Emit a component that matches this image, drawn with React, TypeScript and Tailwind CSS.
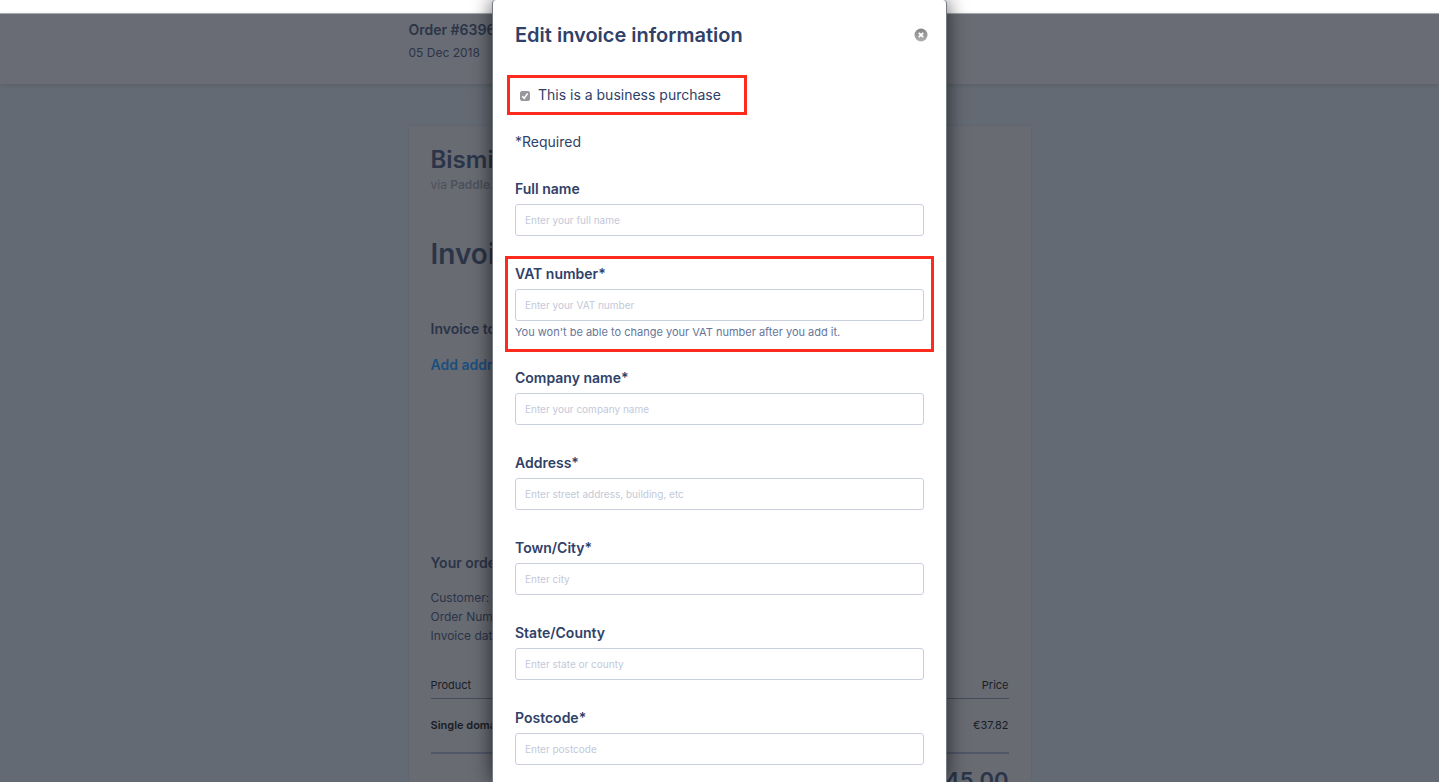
import { useState } from "react";

type FieldProps = {
  id: string;
  label: string;
  placeholder: string;
  help?: string;
  highlighted?: boolean;
};

const Field = ({ id, label, placeholder, help, highlighted }: FieldProps) => {
  return (
    <div className="relative mb-7">
      <label htmlFor={id} className="block text-sm leading-5 font-semibold text-[#2f4168]">{label}</label>
      <input
        id={id}
        type="text"
        placeholder={placeholder}
        className="mt-[5px] block h-8 w-full rounded-[3px] border border-[#c9cfdd] bg-white px-[9px] text-[10px] text-[#2f4168] placeholder:text-[#c3c9d8] outline-none"
      />
      {help && <p className="pt-1 text-[11px] leading-[15px] text-[#66769a]">{help}</p>}
      {highlighted && <div className="pointer-events-none absolute -inset-x-2.5 -top-2 -bottom-3 border-3 border-[#fb2b1d]" />}
    </div>
  );
};

const OrderPage = () => {
  return (
    <div className="grow bg-[#646a73] text-[#2b3448]">
      <header className="h-[71px] border-t border-[#a9abb0] bg-[#696c74] shadow-[0_1px_4px_rgba(0,0,0,0.12)]">
        <div className="mx-auto w-[622px] pt-1.5">
          <h2 className="text-sm leading-5 font-semibold">Order #6396</h2>
          <p className="pt-[3px] text-xs leading-5">05 Dec 2018</p>
        </div>
      </header>

      <main className="mx-auto mt-[42px] w-[622px] bg-[#686b72] px-[22px] pt-[18px] shadow-[0_0_2px_rgba(0,0,0,0.1)]">
        <h1 className="text-2xl leading-8 font-semibold">Bismillah</h1>
        <p className="pt-px text-xs leading-4 text-[#4c515c]">via <span className="font-semibold">Paddle.com</span></p>
        <h2 className="mt-[43px] text-[28px] leading-9 font-semibold">Invoice</h2>
        <h3 className="mt-[47px] text-sm leading-5 font-semibold">Invoice to</h3>
        <a href="#address" className="mt-4 block text-sm leading-5 font-semibold text-[#1b4f7d]">Add address</a>
        <h3 className="mt-[178px] text-sm leading-5 font-semibold">Your order</h3>
        <div className="mt-[15px] text-xs leading-[19px]">
          <p>Customer:</p>
          <p>Order Number:</p>
          <p>Invoice date:</p>
        </div>
        <table className="mt-[31px] w-full text-[11px] text-[#191d26]">
          <thead>
            <tr className="h-[22px] border-b border-[#444b5b]">
              <th className="pb-1 text-left font-normal">Product</th>
              <th className="pb-1 text-right font-normal">Price</th>
            </tr>
          </thead>
          <tbody>
            <tr className="h-[55px] border-b-2 border-[#505767]">
              <td className="text-left font-semibold">Single domain</td>
              <td className="text-right">€37.82</td>
            </tr>
          </tbody>
        </table>
        <p className="pt-3 text-right text-[22px] leading-7 font-semibold">€45.00</p>
      </main>
    </div>
  );
};

const App = () => {
  const [business, setBusiness] = useState(true);

  return (
    <div className="relative flex h-screen flex-col overflow-hidden bg-white pt-[13px] font-['Inter',sans-serif]">
      <OrderPage />

      <div role="dialog" aria-labelledby="title" className="absolute inset-0 mx-auto w-full max-w-[455px] overflow-hidden rounded-t border-x border-[#747986] bg-white px-[22px] pt-[21px] shadow-[0_0_20px_rgba(0,0,0,0.65)]">
        <div className="flex items-center justify-between">
          <h1 id="title" className="text-xl leading-7 font-semibold text-[#2f4168]">Edit invoice information</h1>
          <button type="button" aria-label="Close" className="-mr-1">
            <svg viewBox="0 0 14 14" className="size-3.5">
              <defs>
                <linearGradient id="close" x1="0" y1="0" x2="0" y2="1">
                  <stop offset="0" stopColor="#858585" />
                  <stop offset="1" stopColor="#b1b1b1" />
                </linearGradient>
              </defs>
              <circle cx="7" cy="7" r="6.5" fill="url(#close)" />
              <path d="M4.8 4.8l4.4 4.4M9.2 4.8L4.8 9.2" stroke="#fff" strokeWidth="1.8" />
            </svg>
          </button>
        </div>

        <div className="relative mt-9 flex h-5 items-center gap-2 pl-[5px]">
          <span className="relative mt-0.5 size-2.5">
            <input
              id="business"
              type="checkbox"
              checked={business}
              onChange={(e) => setBusiness(e.target.checked)}
              className="peer block size-2.5 appearance-none rounded-xs border border-[#98989c] bg-white checked:bg-[#98989c]"
            />
            <svg viewBox="0 0 10 10" className="pointer-events-none absolute inset-0 hidden size-2.5 peer-checked:block">
              <path d="M2.3 5.3l1.9 2L7.7 2.4" fill="none" stroke="#fff" strokeWidth="1.5" />
            </svg>
          </span>
          <label htmlFor="business" className="text-sm leading-5 text-[#2f4168]">This is a business purchase</label>
          <div className="pointer-events-none absolute -top-2.5 -bottom-2.5 -left-2 w-[240px] border-3 border-[#fb2b1d]" />
        </div>

        <p className="my-[27px] text-sm leading-5 text-[#2f4168]">*Required</p>

        <form>
          <Field id="name" label="Full name" placeholder="Enter your full name" />
          <Field id="vat" label="VAT number*" placeholder="Enter your VAT number" help="You won't be able to change your VAT number after you add it." highlighted />
          <Field id="company" label="Company name*" placeholder="Enter your company name" />
          <Field id="address" label="Address*" placeholder="Enter street address, building, etc" />
          <Field id="city" label="Town/City*" placeholder="Enter city" />
          <Field id="state" label="State/County" placeholder="Enter state or county" />
          <Field id="postcode" label="Postcode*" placeholder="Enter postcode" />
        </form>
      </div>
    </div>
  );
};

export default App;
